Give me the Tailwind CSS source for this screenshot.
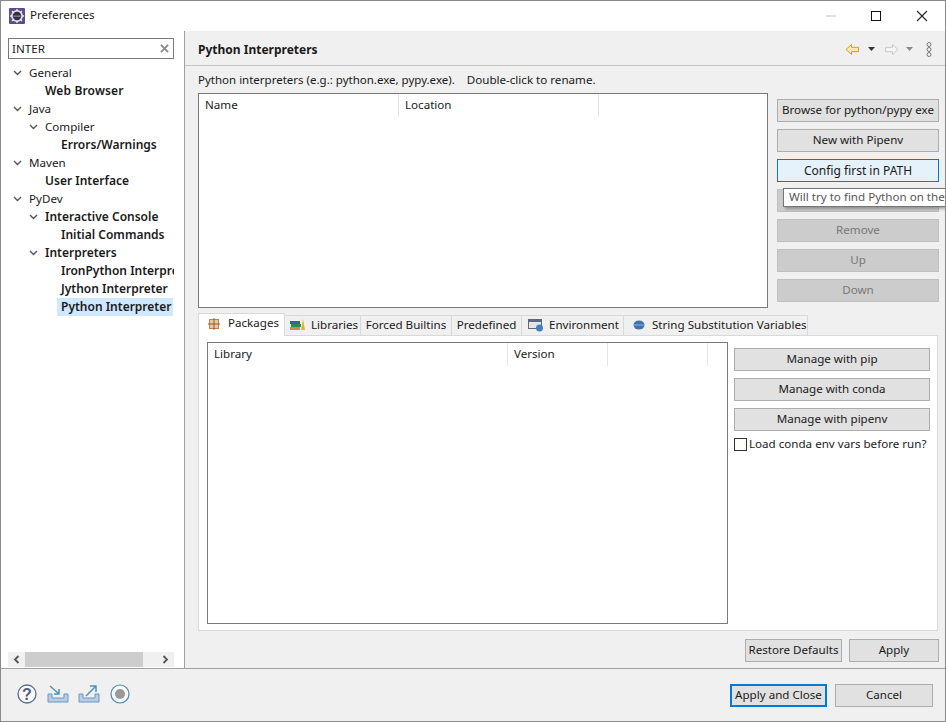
<!DOCTYPE html>
<html lang="en">
<head>
<meta charset="UTF-8">
<title>Preferences</title>
<script src="https://cdn.jsdelivr.net/npm/@tailwindcss/browser@4"></script>
</head>
<body class="m-0 overflow-hidden bg-white">
<div class="relative w-[946px] h-[722px] flex flex-col border border-[#8a8a8a] font-['Noto_Sans',sans-serif] text-[11.6px] leading-[18px] text-[#1a1a1a] overflow-hidden">

  <!-- Title bar -->
  <div class="h-[30px] flex items-center bg-white shrink-0">
    <svg class="ml-[8px] w-[16px] h-[16px]" viewBox="0 0 16 16">
      <rect width="16" height="16" rx="1" fill="#5b4a8c"/>
      <circle cx="8" cy="8" r="6" fill="#d8d8d8"/>
      <circle cx="8" cy="8" r="4.2" fill="#2f2f3f"/>
      <rect x="4.5" y="7.4" width="7" height="1.6" fill="#77779a"/>
      <path d="M8 1v2M8 13v2M1 8h2M13 8h2M3 3l1.500 1.500M11.500 11.500L13 13M13 3l-1.500 1.500M3 13l1.500-1.500" stroke="#e8e8e8" stroke-width="1.400"/>
    </svg>
    <span class="ml-[5px] mb-[2px]">Preferences</span>
    <div class="ml-auto flex items-center">
      <svg class="w-[12px] h-[12px] mr-[33px]" viewBox="0 0 12 12"><path d="M1 6h10" stroke="#c4c4c4"/></svg>
      <svg class="w-[12px] h-[12px] mr-[34px]" viewBox="0 0 12 12"><rect x="1.500" y="1.500" width="9" height="9" fill="none" stroke="#111"/></svg>
      <svg class="w-[12px] h-[12px] mr-[17px]" viewBox="0 0 12 12"><path d="M1 1l10 10M11 1L1 11" stroke="#222" stroke-width="1.100"/></svg>
    </div>
  </div>

  <div class="flex flex-1 min-h-0">
    <!-- Left tree pane -->
    <div class="w-[184px] shrink-0 bg-white border-r border-[#a0a0a0] flex flex-col pl-[7px] pr-[10px] pt-[7px] pb-0">
      <div class="h-[21px] border border-[#7a7a7a] flex items-center justify-between pl-[3px] pr-[4px] shrink-0">
        <span>INTER</span>
        <svg class="w-[9px] h-[9px]" viewBox="0 0 10 10"><path d="M1 1l8 8M9 1L1 9" stroke="#8a8a8a" stroke-width="2"/></svg>
      </div>
      <div class="mt-[5px] flex-1 min-h-0 overflow-hidden flex flex-col whitespace-nowrap">
        <div class="h-[18px] flex items-center"><svg class="ml-[5px] w-[9px] h-[6px]" viewBox="0 0 9 6"><path d="M1 1l3.500 3.500L8 1" fill="none" stroke="#555" stroke-width="1.400"/></svg><span class="ml-[7px]">General</span></div>
        <div class="h-[18px] flex items-center pl-[37px] text-[12px] font-semibold tracking-[0.15px]">Web Browser</div>
        <div class="h-[18px] flex items-center"><svg class="ml-[5px] w-[9px] h-[6px]" viewBox="0 0 9 6"><path d="M1 1l3.500 3.500L8 1" fill="none" stroke="#555" stroke-width="1.400"/></svg><span class="ml-[7px]">Java</span></div>
        <div class="h-[18px] flex items-center"><svg class="ml-[21px] w-[9px] h-[6px]" viewBox="0 0 9 6"><path d="M1 1l3.500 3.500L8 1" fill="none" stroke="#555" stroke-width="1.400"/></svg><span class="ml-[7px]">Compiler</span></div>
        <div class="h-[18px] flex items-center pl-[53px] text-[12px] font-semibold">Errors/Warnings</div>
        <div class="h-[18px] flex items-center"><svg class="ml-[5px] w-[9px] h-[6px]" viewBox="0 0 9 6"><path d="M1 1l3.500 3.500L8 1" fill="none" stroke="#555" stroke-width="1.400"/></svg><span class="ml-[7px]">Maven</span></div>
        <div class="h-[18px] flex items-center pl-[37px] text-[12px] font-semibold">User Interface</div>
        <div class="h-[18px] flex items-center"><svg class="ml-[5px] w-[9px] h-[6px]" viewBox="0 0 9 6"><path d="M1 1l3.500 3.500L8 1" fill="none" stroke="#555" stroke-width="1.400"/></svg><span class="ml-[7px]">PyDev</span></div>
        <div class="h-[18px] flex items-center text-[12px] font-semibold"><svg class="ml-[21px] w-[9px] h-[6px]" viewBox="0 0 9 6"><path d="M1 1l3.500 3.500L8 1" fill="none" stroke="#555" stroke-width="1.400"/></svg><span class="ml-[7px]">Interactive Console</span></div>
        <div class="h-[18px] flex items-center pl-[53px] text-[12px] font-semibold">Initial Commands</div>
        <div class="h-[18px] flex items-center text-[12px] font-semibold"><svg class="ml-[21px] w-[9px] h-[6px]" viewBox="0 0 9 6"><path d="M1 1l3.500 3.500L8 1" fill="none" stroke="#555" stroke-width="1.400"/></svg><span class="ml-[7px]">Interpreters</span></div>
        <div class="h-[18px] flex items-center pl-[53px] text-[12px] font-semibold overflow-hidden">IronPython Interpreter</div>
        <div class="h-[18px] flex items-center pl-[53px] text-[12px] font-semibold">Jython Interpreter</div>
        <div class="h-[18px] flex items-center ml-[49px] mr-[1px] pl-[4px] text-[12px] font-semibold bg-[#cde8ff]">Python Interpreter</div>
      </div>
      <div class="h-[15px] mb-px bg-[#f0f0f0] flex items-center justify-between shrink-0">
        <svg class="ml-[5px] w-[7px] h-[9px]" viewBox="0 0 7 9"><path d="M5.500 1L2 4.500 5.500 8" fill="none" stroke="#555" stroke-width="1.800"/></svg>
        <div class="w-[118px] h-[15px] bg-[#cdcdcd] ml-[5px] mr-auto"></div>
        <svg class="mr-[5px] w-[7px] h-[9px]" viewBox="0 0 7 9"><path d="M1.500 1L5 4.500 1.500 8" fill="none" stroke="#555" stroke-width="1.800"/></svg>
      </div>
    </div>

    <!-- Right content pane -->
    <div class="flex-1 min-w-0 bg-[#f0f0f0] flex flex-col">
      <div class="h-[35px] shrink-0 border-b border-[#c4c4c4] flex items-center pl-[13px] pr-[13px] pt-[4px]">
        <span class="font-bold text-[12px]">Python Interpreters</span>
        <div class="ml-auto flex items-center mb-[2px]">
          <svg class="w-[15px] h-[13px]" viewBox="0 0 15 13"><path d="M1 6.500L6.500 1.500v2.800h7v4.400h-7v2.800z" fill="#fde9a8" stroke="#d89a2a"/></svg>
          <svg class="ml-[8px] w-[7px] h-[4px]" viewBox="0 0 7 4"><path d="M0 0h7L3.500 4z" fill="#333"/></svg>
          <svg class="ml-[9px] w-[15px] h-[13px]" viewBox="0 0 15 13"><path d="M14 6.500L8.500 1.500v2.800h-7v4.400h7v2.800z" fill="#f4f4f4" stroke="#c8c8c8"/></svg>
          <svg class="ml-[7px] w-[7px] h-[4px]" viewBox="0 0 7 4"><path d="M0 0h7L3.500 4z" fill="#8a8a8a"/></svg>
          <svg class="ml-[13px] w-[6px] h-[15px]" viewBox="0 0 6 15"><circle cx="3" cy="2.500" r="2" fill="none" stroke="#777"/><circle cx="3" cy="7.500" r="2" fill="none" stroke="#777"/><circle cx="3" cy="12.500" r="2" fill="none" stroke="#777"/></svg>
        </div>
      </div>

      <div class="flex-1 min-h-0 flex flex-col pl-[13px] pr-[6px]">
        <div class="h-[27px] shrink-0 flex items-center whitespace-pre"><span class="text-[11.5px]">Python interpreters (e.g.: python.exe, pypy.exe).</span><span class="ml-[12px]">Double-click to rename.</span></div>
        <div class="flex h-[215px] shrink-0">
          <div class="w-[570px] h-[215px] border border-[#7a7a7a] bg-white flex items-start">
            <div class="w-[200px] h-[23px] border-r border-[#e5e5e5] pl-[6px] pb-[2px] flex items-center">Name</div>
            <div class="w-[200px] h-[23px] border-r border-[#e5e5e5] pl-[6px] pb-[2px] flex items-center">Location</div>
          </div>
          <div class="ml-[9px] w-[162px] flex flex-col gap-[7px] pt-[6px]">
            <div class="h-[23px] pb-[2px] border border-[#adadad] bg-[#e1e1e1] flex items-center justify-center whitespace-nowrap">Browse for python/pypy exe</div>
            <div class="h-[23px] pb-[2px] border border-[#adadad] bg-[#e1e1e1] flex items-center justify-center">New with Pipenv</div>
            <div class="h-[23px] border border-[#0078d7] bg-[#e5f1fb] flex items-center justify-center text-[12px]">Config first in PATH</div>
            <div class="h-[23px] border border-[#bfbfbf] bg-[#cccccc]"></div>
            <div class="h-[23px] pb-[2px] border border-[#bfbfbf] bg-[#cccccc] text-[#787878] flex items-center justify-center">Remove</div>
            <div class="h-[23px] pb-[2px] border border-[#bfbfbf] bg-[#cccccc] text-[#787878] flex items-center justify-center">Up</div>
            <div class="h-[23px] pb-[2px] border border-[#bfbfbf] bg-[#cccccc] text-[#787878] flex items-center justify-center">Down</div>
          </div>
        </div>

        <!-- Tabs -->
        <div class="mt-[5px] h-[23px] shrink-0 flex items-stretch relative z-10">
          <div class="w-[87px] h-[23px] bg-white border border-b-0 border-[#d9d9d9] flex items-center pl-[9px] pb-[2px]">
            <svg class="w-[12px] h-[12px]" viewBox="0 0 12 12"><rect x="1.500" y="1.500" width="9" height="9" fill="#e8c8a0" stroke="#b9824e"/><path d="M6 0v12M0 6h12" stroke="#9a5a2a"/></svg>
            <span class="ml-[8px] mb-[2px]">Packages</span>
          </div>
          <div class="mt-[2px] h-[21px] w-[76px] border-t border-r border-[#d9d9d9] flex items-center pl-[5px]">
            <svg class="w-[16px] h-[13px] mb-[3px]" viewBox="0 0 16 13"><rect x="0" y="9" width="10" height="3" fill="#d08a4a"/><rect x="1" y="6" width="10" height="3" fill="#2d8a50"/><rect x="0" y="3" width="10" height="3" fill="#2a6a9a"/><path d="M11 12l2-11 2 11z" fill="#e5b32a"/></svg>
            <span class="ml-[5px] mb-[2px]">Libraries</span>
          </div>
          <div class="mt-[2px] h-[21px] w-[91px] pb-[2px] border-t border-r border-[#d9d9d9] flex items-center justify-center">Forced Builtins</div>
          <div class="mt-[2px] h-[21px] w-[70px] pb-[2px] border-t border-r border-[#d9d9d9] flex items-center justify-center">Predefined</div>
          <div class="mt-[2px] h-[21px] w-[102px] border-t border-r border-[#d9d9d9] flex items-center pl-[6px]">
            <svg class="w-[16px] h-[14px] mb-[2px]" viewBox="0 0 16 14"><rect x="0.500" y="1.500" width="13" height="9" fill="#dfe6ee" stroke="#666"/><rect x="1" y="2" width="12" height="2" fill="#5a6a80"/><circle cx="11.500" cy="10" r="3.500" fill="#3f7fc0"/></svg>
            <span class="ml-[5px] mb-[2px]">Environment</span>
          </div>
          <div class="mt-[2px] h-[21px] w-[184px] border-t border-r border-[#d9d9d9] flex items-center pl-[9px]">
            <svg class="w-[12px] h-[10px] mb-[2px]" viewBox="0 0 12 10"><ellipse cx="6" cy="5" rx="5.500" ry="4.500" fill="#3f74b0"/><rect x="0.500" y="4.500" width="11" height="1" fill="#8fb3d8"/></svg>
            <span class="ml-[7px] mb-[2px] whitespace-nowrap">String Substitution Variables</span>
          </div>
        </div>
        <div class="h-[296px] w-[740px] -mt-px shrink-0 bg-white border border-[#d9d9d9] pl-[8px] pt-[6px] flex">
          <div class="w-[521px] h-[282px] border border-[#7a7a7a] flex items-start">
            <div class="w-[300px] h-[23px] border-r border-[#e5e5e5] pl-[6px] pb-[2px] flex items-center">Library</div>
            <div class="w-[100px] h-[23px] border-r border-[#e5e5e5] pl-[6px] pb-[2px] flex items-center">Version</div>
            <div class="w-[100px] h-[23px] border-r border-[#e5e5e5]"></div>
          </div>
          <div class="ml-[6px] w-[196px] pt-[6px] flex flex-col gap-[7px]">
            <div class="h-[23px] pb-[2px] border border-[#adadad] bg-[#e1e1e1] flex items-center justify-center">Manage with pip</div>
            <div class="h-[23px] pb-[2px] border border-[#adadad] bg-[#e1e1e1] flex items-center justify-center">Manage with conda</div>
            <div class="h-[23px] pb-[2px] border border-[#adadad] bg-[#e1e1e1] flex items-center justify-center">Manage with pipenv</div>
            <div class="flex items-center -mt-[1px] h-[15px]">
              <div class="w-[13px] h-[13px] shrink-0 border border-[#333] bg-white"></div>
              <span class="ml-[2px] mb-[2px] whitespace-nowrap">Load conda env vars before run?</span>
            </div>
          </div>
        </div>

        <div class="mt-[8px] flex justify-end gap-[7px] pr-[0px]">
          <div class="w-[97px] h-[23px] pb-[2px] border border-[#adadad] bg-[#e1e1e1] flex items-center justify-center">Restore Defaults</div>
          <div class="w-[90px] h-[23px] pb-[2px] border border-[#adadad] bg-[#e1e1e1] flex items-center justify-center">Apply</div>
        </div>
      </div>
    </div>
  </div>

  <!-- Footer -->
  <div class="h-[53px] shrink-0 bg-[#f0f0f0] border-t border-[#a0a0a0] flex items-start pl-[16px] pr-[12px] pt-[15px]">
    <svg class="w-[20px] h-[20px]" viewBox="0 0 20 20"><circle cx="10" cy="10" r="9" fill="#fafafa" stroke="#5a6c8c" stroke-width="1.300"/><text x="10" y="15.500" text-anchor="middle" font-family="Liberation Sans" font-weight="700" font-size="16" fill="#4f6080">?</text></svg>
    <svg class="ml-[10px] w-[22px] h-[20px]" viewBox="0 0 22 20"><path d="M1 10v8h20v-8h-4v4H5v-4z" fill="#b6cde6" stroke="#6d94c0"/><path d="M3 2l9 8M12 5v5H7" fill="none" stroke="#4f93c4" stroke-width="1.500"/></svg>
    <svg class="ml-[9px] w-[22px] h-[20px]" viewBox="0 0 22 20"><path d="M1 10v8h20v-8h-4v4H5v-4z" fill="#b6cde6" stroke="#6d94c0"/><path d="M8 12l10-10M12 2h6v6" fill="none" stroke="#4f93c4" stroke-width="1.500"/></svg>
    <svg class="ml-[10px] w-[20px] h-[20px]" viewBox="0 0 20 20"><circle cx="10" cy="10" r="9" fill="#fafafa" stroke="#4f86b8" stroke-width="1.200"/><circle cx="10" cy="10" r="5" fill="#9a9a9a"/></svg>
    <div class="ml-auto flex gap-[8px]">
      <div class="w-[97px] h-[23px] pb-[2px] border-2 border-[#0078d7] bg-[#e1e1e1] flex items-center justify-center">Apply and Close</div>
      <div class="w-[98px] h-[23px] pb-[2px] border border-[#adadad] bg-[#e1e1e1] flex items-center justify-center">Cancel</div>
    </div>
  </div>

  <!-- Tooltip over the buttons -->
  <div class="absolute left-[782px] top-[187px] w-[170px] h-[19px] pb-[2px] bg-white border border-[#767676] shadow-[2px_2px_3px_rgba(0,0,0,0.3)] pl-[5px] text-[#575757] whitespace-nowrap flex items-center">Will try to find Python on the</div>
</div>
</body>
</html>
